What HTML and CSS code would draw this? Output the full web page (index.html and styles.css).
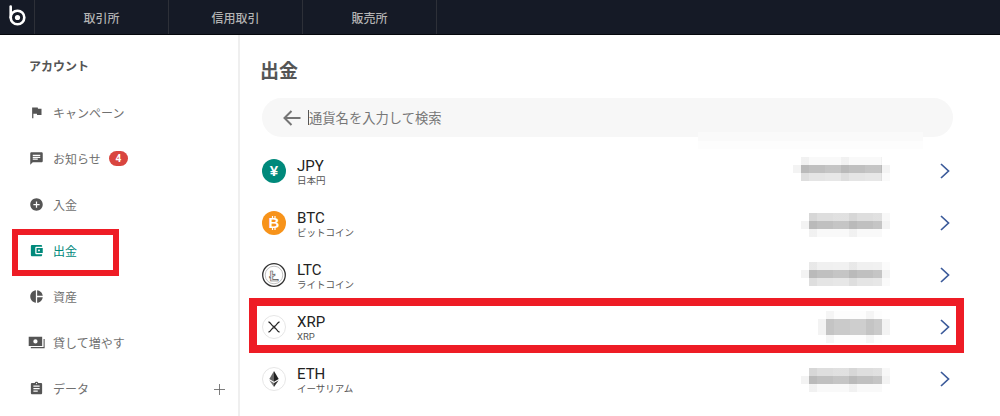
FILE: index.html
```html
<!DOCTYPE html>
<html>
<head>
  <meta charset="UTF-8">
  <title>出金</title>
  <link rel="stylesheet" href="styles.css">
</head>
<body>
  <header class="topbar">
    <a class="logo">
      <svg width="20" height="22" viewBox="0 0 20 22"><circle cx="10.5" cy="12.5" r="6.8" fill="none" stroke="#fff" stroke-width="2.6"/><circle cx="10.5" cy="12.5" r="2.6" fill="#fff"/><path d="M3.7 12.5V1.5" stroke="#fff" stroke-width="2.6" fill="none" stroke-linecap="round"/></svg>
    </a>
    <a class="tab">取引所</a>
    <a class="tab">信用取引</a>
    <a class="tab">販売所</a>
  </header>

  <div class="layout">
    <nav class="sidebar">
      <div class="side-title">アカウント</div>
      <a class="side-item">
        <svg class="side-icon" viewBox="0 0 24 24"><path d="M14.4 6L14 4H5v17h2v-7h5.6l.4 2h7V6z"/></svg>
        キャンペーン
      </a>
      <a class="side-item">
        <svg class="side-icon" viewBox="0 0 24 24"><path d="M20 2H4c-1.1 0-1.99.9-1.99 2L2 22l4-4h14c1.1 0 2-.9 2-2V4c0-1.1-.9-2-2-2zM6 9h12v2H6V9zm8 5H6v-2h8v2zm4-6H6V6h12v2z"/></svg>
        お知らせ
        <span class="badge">4</span>
      </a>
      <a class="side-item">
        <svg class="side-icon" viewBox="0 0 24 24"><path d="M12 2C6.48 2 2 6.48 2 12s4.48 10 10 10 10-4.48 10-10S17.52 2 12 2zm5 11h-4v4h-2v-4H7v-2h4V7h2v4h4v2z"/></svg>
        入金
      </a>
      <a class="side-item active">
        <svg class="side-icon" viewBox="0 0 24 24"><path d="M21 18v1c0 1.1-.9 2-2 2H5c-1.11 0-2-.9-2-2V5c0-1.1.89-2 2-2h14c1.1 0 2 .9 2 2v1h-9c-1.11 0-2 .9-2 2v8c0 1.1.89 2 2 2h9zm-9-2h10V8H12v8zm4-2.5c-.83 0-1.5-.67-1.5-1.5s.67-1.5 1.5-1.5 1.5.67 1.5 1.5-.67 1.5-1.5 1.5z"/></svg>
        出金
        <span class="mark mark-side"></span>
      </a>
      <a class="side-item">
        <svg class="side-icon" viewBox="0 0 24 24"><path d="M11 2v20c-5.07-.5-9-4.79-9-10s3.93-9.5 9-10zm2.03 0v8.99H22c-.47-4.74-4.24-8.52-8.97-8.99zm0 11.01V22c4.74-.47 8.5-4.25 8.97-8.99h-8.97z"/></svg>
        資産
      </a>
      <a class="side-item">
        <svg class="side-icon icon-money" viewBox="0 0 24 24"><path fill-rule="evenodd" d="M1 4h19v13H1zM10.5 7.500a3 3 0 1 0 0 6 3 3 0 0 0 0-6z"/><path d="M22 7h1.500v13H4v-1.500h18z"/></svg>
        貸して増やす
      </a>
      <a class="side-item">
        <svg class="side-icon" viewBox="0 0 24 24"><path d="M19 3h-4.18C14.4 1.84 13.3 1 12 1c-1.3 0-2.4.84-2.82 2H5c-1.1 0-2 .9-2 2v14c0 1.1.9 2 2 2h14c1.1 0 2-.9 2-2V5c0-1.1-.9-2-2-2zm-7 0c.55 0 1 .45 1 1s-.45 1-1 1-1-.45-1-1 .45-1 1-1zm2 14H7v-2h7v2zm3-4H7v-2h10v2zm0-4H7V7h10v2z"/></svg>
        データ
        <svg class="side-plus" viewBox="0 0 13 13"><path d="M6.500 0v13M0 6.500h13" stroke="#666" stroke-width="1" fill="none"/></svg>
      </a>
    </nav>

    <main class="content">
      <h1 class="page-title">出金</h1>
      <div class="search">
        <svg class="search-back" viewBox="0 0 18 16"><path d="M17.500 8H2M8.500 1L1.500 8l7 7" fill="none" stroke="#757575" stroke-width="2"/></svg>
        <span class="caret"></span>
        <span class="search-text">通貨名を入力して検索</span>
        <span class="search-ghost"></span>
      </div>

      <div class="coin-list">
        <div class="coin-row">
          <svg class="coin-icon" viewBox="0 0 24 24">
            <circle cx="12" cy="12" r="12" fill="#00897b"/>
            <text x="12" y="17" class="coin-glyph" fill="#fff">¥</text>
          </svg>
          <div class="coin-name"><div class="coin-code">JPY</div><div class="coin-sub">日本円</div></div>
          <div class="mosaic mosaic-jpy">
            <div class="strip tone-faint"></div>
            <div class="strip tone-dark"></div>
            <div class="strip tone-light"></div>
          </div>
          <svg class="chevron" viewBox="0 0 10 16"><path d="M1 1l7.500 7L1 15" fill="none" stroke="#3b5a9a" stroke-width="1.7"/></svg>
        </div>

        <div class="coin-row">
          <svg class="coin-icon" viewBox="0 0 24 24">
            <circle cx="12" cy="12" r="12" fill="#f7931a"/>
            <text x="12" y="17" class="coin-glyph" fill="#fff">B</text>
            <path d="M10.500 5v2.500M13 5v2.500M10.500 16.500V19M13 16.500V19" stroke="#fff" stroke-width="1.200"/>
          </svg>
          <div class="coin-name"><div class="coin-code">BTC</div><div class="coin-sub">ビットコイン</div></div>
          <div class="mosaic mosaic-btc">
            <div class="strip tone-mid"></div>
            <div class="strip tone-dark"></div>
            <div class="strip tone-faint"></div>
          </div>
          <svg class="chevron" viewBox="0 0 10 16"><path d="M1 1l7.500 7L1 15" fill="none" stroke="#3b5a9a" stroke-width="1.7"/></svg>
        </div>

        <div class="coin-row">
          <svg class="coin-icon" viewBox="0 0 24 24">
            <circle cx="12" cy="12" r="11.300" fill="#fff" stroke="#333" stroke-width="1.300"/>
            <circle cx="12" cy="12" r="8.800" fill="#fff" stroke="#999" stroke-width=".6"/>
            <text x="12" y="17.500" class="coin-glyph glyph-outline">Ł</text>
          </svg>
          <div class="coin-name"><div class="coin-code">LTC</div><div class="coin-sub">ライトコイン</div></div>
          <div class="mosaic mosaic-ltc">
            <div class="strip tone-pale"></div>
            <div class="strip tone-dark"></div>
            <div class="strip tone-light"></div>
          </div>
          <svg class="chevron" viewBox="0 0 10 16"><path d="M1 1l7.500 7L1 15" fill="none" stroke="#3b5a9a" stroke-width="1.7"/></svg>
        </div>

        <div class="coin-row">
          <svg class="coin-icon" viewBox="0 0 24 24">
            <circle cx="12" cy="12" r="11.500" fill="#fff" stroke="#e6e6e6"/>
            <path d="M6.500 7c2.500 0 3 4.500 5.500 4.500S15 7 17.500 7M6.500 17c2.500 0 3-4.500 5.500-4.500s3 4.500 5.500 4.500" fill="none" stroke="#222" stroke-width="1.300"/>
          </svg>
          <div class="coin-name"><div class="coin-code">XRP</div><div class="coin-sub">XRP</div></div>
          <div class="mosaic mosaic-xrp">
            <div class="strip tone-none"></div>
            <div class="strip tone-soft"></div>
            <div class="strip tone-soft"></div>
            <div class="strip tone-none"></div>
          </div>
          <svg class="chevron" viewBox="0 0 10 16"><path d="M1 1l7.500 7L1 15" fill="none" stroke="#3b5a9a" stroke-width="1.7"/></svg>
          <span class="mark mark-row"></span>
        </div>

        <div class="coin-row">
          <svg class="coin-icon" viewBox="0 0 24 24">
            <circle cx="12" cy="12" r="11.500" fill="#fff" stroke="#e6e6e6"/>
            <path d="M12 4l-4.700 8 4.700 2.800z" fill="#666"/>
            <path d="M12 4l4.700 8-4.700 2.800z" fill="#222"/>
            <path d="M7.300 13.200L12 20v-4z" fill="#777"/>
            <path d="M16.700 13.200L12 20v-4z" fill="#333"/>
          </svg>
          <div class="coin-name"><div class="coin-code">ETH</div><div class="coin-sub">イーサリアム</div></div>
          <div class="mosaic mosaic-eth">
            <div class="strip tone-mid"></div>
            <div class="strip tone-dark"></div>
            <div class="strip tone-faint"></div>
          </div>
          <svg class="chevron" viewBox="0 0 10 16"><path d="M1 1l7.500 7L1 15" fill="none" stroke="#3b5a9a" stroke-width="1.7"/></svg>
        </div>
      </div>
    </main>
  </div>
</body>
</html>
```

FILE: styles.css
```css
* {
  box-sizing: border-box;
}
body {
  margin: 0;
  height: 416px;
  overflow: hidden;
  background: #fff;
  color: #707070;
  font-family: Roboto, "Noto Sans CJK JP", sans-serif;
}

/* top bar */
.topbar {
  display: flex;
  height: 35px;
  background: #151a26;
  border-bottom: 1px solid #05070c;
}
.logo {
  display: flex;
  align-items: center;
  justify-content: center;
  width: 35px;
  padding-bottom: 2px;
  border-right: 1px solid #2d3038;
}
.tab {
  display: flex;
  align-items: center;
  justify-content: center;
  width: 134px;
  font-size: 12px;
  font-weight: 500;
  color: #b3b3b3;
  border-right: 1px solid #2d3038;
}

.layout {
  display: flex;
  height: 381px;
}

/* sidebar */
.sidebar {
  width: 240px;
  flex: none;
  border-right: 2px solid #efefef;
}
.side-title {
  height: 54px;
  padding: 22px 0 0 29px;
  font-size: 12px;
  line-height: 20px;
  font-weight: 700;
  color: #555;
}
.side-item {
  position: relative;
  display: flex;
  align-items: center;
  height: 46px;
  padding-left: 29px;
  font-size: 12px;
}
.side-icon {
  width: 15px;
  height: 15px;
  margin-right: 9px;
  fill: #555;
}
.icon-money {
  width: 17px;
  height: 17px;
  margin-left: -1px;
  margin-right: 8px;
}
.side-item.active {
  color: #00897b;
}
.side-item.active .side-icon {
  fill: #00897b;
}
.badge {
  margin-left: 8px;
  width: 19px;
  height: 15px;
  border-radius: 8px;
  background: #d9453f;
  color: #fff;
  font-size: 10px;
  font-weight: 700;
  line-height: 15px;
  text-align: center;
}
.side-plus {
  width: 11px;
  height: 11px;
  margin: 3px 13px 0 auto;
}

/* main column */
.content {
  flex: 1;
  padding: 23px 47px 0 22px;
}
.page-title {
  margin: 0 0 12px -2px;
  font-size: 19px;
  line-height: 28px;
  font-weight: 700;
  color: #555;
}
.search {
  position: relative;
  display: flex;
  align-items: center;
  height: 39px;
  margin-bottom: 8px;
  padding-left: 21px;
  border-radius: 20px;
  background: #f7f7f7;
}
.search-back {
  width: 18px;
  height: 16px;
  margin-right: 7px;
}
.caret {
  width: 1px;
  height: 15px;
  background: #555;
}
.search-text {
  font-size: 13.3px;
  color: #777;
}
/* faint leftover of a dropdown in the shot */
.search-ghost {
  position: absolute;
  left: 436px;
  top: 34px;
  width: 225px;
  height: 17px;
  background: linear-gradient(#fafafa 0 9px, #fdfdfd 9px);
}

.coin-row {
  position: relative;
  display: flex;
  align-items: center;
  height: 52px;
}
.coin-icon {
  width: 24px;
  height: 24px;
  margin-right: 11px;
  flex: none;
}
.coin-glyph {
  font-size: 15px;
  font-weight: 700;
  text-anchor: middle;
  font-family: "Liberation Sans", sans-serif;
}
.glyph-outline {
  fill: #e8e8e8;
  stroke: #555;
  stroke-width: .6;
}
.coin-name {
  margin-top: 3px;
}
.coin-code {
  font-size: 15px;
  line-height: 17px;
  color: #222;
}
.coin-sub {
  font-size: 9.5px;
  line-height: 12px;
  color: #555;
}
.chevron {
  width: 10px;
  height: 16px;
  margin: 0 3px 0 50px;
  flex: none;
}

/* hidden balances, pixelated in the shot */
.mosaic {
  margin-left: auto;
}
.mosaic-jpy {
  width: 97px;
  margin-top: -4px;
}
.mosaic-btc {
  width: 89px;
  margin-top: 4px;
}
.mosaic-ltc {
  width: 89px;
  margin-top: -2px;
}
.mosaic-xrp {
  width: 72px;
}
.mosaic-eth {
  width: 89px;
  margin-top: 2px;
}
.strip {
  height: 8px;
  border: solid #fff;
  border-width: 0 8px;
  background-image: repeating-linear-gradient(90deg, rgba(0,0,0,.03) 0 8px, transparent 8px 24px, rgba(255,255,255,.08) 24px 40px);
}
.tone-dark { background-color: #c0c0c0; border-color: #f3f3f3; }
.tone-soft { background-color: #cacaca; border-color: #f3f3f3; }
.tone-mid { background-color: #dedede; border-right-color: #f8f8f8; }
.tone-light { background-color: #e5e5e5; border-right-color: #fafafa; }
.tone-pale { background-color: #f0f0f0; border-right-color: #fbfbfb; }
.tone-faint { background-color: #f9f9f9; }
.tone-none { background-color: #fdfdfd; }

/* red annotation boxes drawn over the shot */
.mark {
  position: absolute;
  border-style: solid;
  border-color: #ee1c25;
  pointer-events: none;
}
.mark-side {
  left: 12px;
  right: 119px;
  top: 2px;
  bottom: -3px;
  border-width: 6px;
}
.mark-row {
  left: -13px;
  right: -11px;
  top: -3px;
  bottom: 0;
  border-width: 8px;
}
```
